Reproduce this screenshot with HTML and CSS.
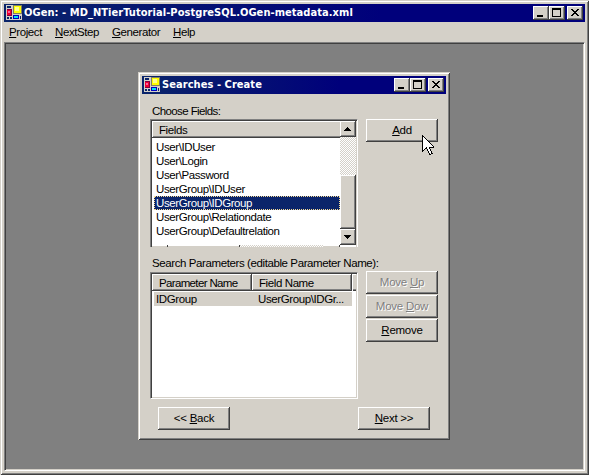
FILE: index.html
```
<!DOCTYPE html>
<html lang="en">
<head>
<meta charset="utf-8">
<title>OGen</title>
<link rel="stylesheet" href="styles.css">
</head>
<body>
<svg width="0" height="0" class="defs">
  <symbol id="app" viewBox="0 0 16 16">
    <path d="M0 0h16v15H0z" fill="#d4d0c8"/>
    <path d="M1 1h4v2H1zM1 12h2v2H1zM4 12h2v2H4zM14 11h1v3h-1z" fill="#0a246a"/>
    <path d="M1 4h5v7H1z" fill="#800040"/><path d="M1 5h4v5H1z" fill="#f00030"/><path d="M2 6h2v2H2z" fill="#ff60a0"/>
    <path d="M7 0h9v9H7z" fill="#808060"/><path d="M8 1h7v7H8z" fill="#ffff00"/><path d="M9 2h4v4H9z" fill="#ffff90"/>
    <path d="M7 10h6v4H7z" fill="#0000c0"/><path d="M8 11h4v2H8z" fill="#00e0f0"/>
  </symbol>
  <symbol id="min" viewBox="0 0 16 14"><path d="M4 9h6v2H4z"/></symbol>
  <symbol id="max" viewBox="0 0 16 14"><path fill-rule="evenodd" d="M3 2h9v9H3zM4 4v6h7V4z"/></symbol>
  <symbol id="close" viewBox="0 0 16 14"><path d="M4 3h2v1h1v1h2V4h1V3h2v1h-1v1h-1v1H9v1h1v1h1v1h1v1h-2V9H9V8H7v1H6v1H4V9h1V8h1V7h1V6H6V5H5V4H4z"/></symbol>
</svg>
<div class="window main">
  <div class="titlebar">
    <svg class="app"><use href="#app"/></svg><span class="caption">OGen: - MD_NTierTutorial-PostgreSQL.OGen-metadata.xml</span>
    <div class="controls"><svg class="ctl"><use href="#min"/></svg><svg class="ctl"><use href="#max"/></svg><svg class="ctl last"><use href="#close"/></svg></div>
  </div>
  <div class="menu"><span class="m1"><u>P</u>roject</span><span class="m2"><u>N</u>extStep</span><span class="m3"><u>G</u>enerator</span><span class="m4"><u>H</u>elp</span></div>
  <div class="client">
    <div class="window dialog">
      <div class="titlebar">
        <svg class="app"><use href="#app"/></svg><span class="caption">Searches - Create</span>
        <div class="controls"><svg class="ctl"><use href="#min"/></svg><svg class="ctl"><use href="#max"/></svg><svg class="ctl last"><use href="#close"/></svg></div>
      </div>
      <div class="form">
        <div class="label choose">Choose Fields:</div>
        <div class="row row-fields">
          <div class="list fields">
            <div class="pane">
              <div class="head"><span>Fields</span></div>
              <ul>
                <li>User\IDUser</li><li>User\Login</li><li>User\Password</li><li>UserGroup\IDUser</li>
                <li class="selected">UserGroup\IDGroup</li><li>UserGroup\Relationdate</li><li>UserGroup\Defaultrelation</li>
              </ul>
              <div class="hscroll"><i class="arrow"></i><i class="bar"></i><i class="track"></i><i class="arrow"></i></div>
            </div>
            <div class="vscroll">
              <svg class="sb" viewBox="0 0 16 16"><path d="M7 6h1v1h1v1h1v1h1v1H4V9h1V8h1V7h1z"/></svg>
              <div class="thumb"></div>
              <svg class="sb" viewBox="0 0 16 16"><path d="M4 6h7v1h-1v1H9v1H8v1H7V9H6V8H5V7H4z"/></svg>
            </div>
          </div>
          <div class="side"><div class="button"><span><u>A</u>dd</span></div></div>
        </div>
        <div class="label params-label">Search Parameters (editable Parameter Name):</div>
        <div class="row row-params">
          <div class="list params">
            <div class="cols"><div class="head"><span class="pn">Parameter Name</span></div><div class="head"><span>Field Name</span></div><div class="head rest"></div></div>
            <div class="record"><span>IDGroup</span><span>UserGroup\IDGr...</span></div>
          </div>
          <div class="side">
            <div class="button disabled"><span>Move <u>U</u>p</span></div>
            <div class="button disabled"><span>Move <u>D</u>ow</span></div>
            <div class="button"><span><u>R</u>emove</span></div>
          </div>
        </div>
        <div class="nav"><div class="button"><span>&lt;&lt; <u>B</u>ack</span></div><div class="button"><span><u>N</u>ext &gt;&gt;</span></div></div>
      </div>
    </div>
  </div>
</div>
<svg class="cursor" viewBox="0 0 12 21"><path d="M.5.5v16l4-4 3 7 2.500-1-3-6.500h5z" fill="#fff" stroke="#000"/></svg>
</body>
</html>
```
FILE: styles.css
```
* { box-sizing: border-box; }
body { margin: 0; width: 589px; height: 475px; overflow: hidden; font: 11.5px/14px "Liberation Sans", Arial, sans-serif; letter-spacing: -0.4px; color: #000; white-space: nowrap; }
.defs { position: absolute; }
svg { display: block; flex: none; shape-rendering: crispEdges; }
u { text-decoration: underline; text-decoration-thickness: 1px; text-underline-offset: 1px; text-decoration-skip-ink: none; }
.window { background: #d4d0c8; padding: 4px; box-shadow: inset 1px 1px #d4d0c8, inset -1px -1px #404040, inset 2px 2px #fff, inset -2px -2px #808080; }
.main { width: 589px; height: 475px; }
.titlebar { height: 18px; display: flex; align-items: center; padding: 0 2px; background: linear-gradient(90deg, #0a246a, #00007b 65%); color: #fff; }
.app { width: 16px; height: 16px; }
.caption { margin-left: 2px; font: bold 11px/18px "DejaVu Sans Condensed", "DejaVu Sans", sans-serif; letter-spacing: 0.06px; }
.controls { margin-left: auto; display: flex; }
.ctl { width: 16px; height: 14px; background: #d4d0c8; box-shadow: inset -1px -1px #404040, inset 1px 1px #fff, inset -2px -2px #808080; }
.last { margin-left: 2px; }
.menu { height: 20px; display: flex; padding: 3px 5px; }
.m1 { width: 46px; }
.m2 { width: 57px; }
.m3 { width: 61px; }
.client { height: 429px; padding: 29px 0 0 133px; background: #808080; border: 1px solid; border-color: #808080 #fff #fff #808080; box-shadow: inset 1px 1px #404040, inset -1px -1px #d4d0c8; }
.dialog { width: 312px; height: 368px; }
.form { padding: 10px 8px 0; }
.label { height: 14px; padding-left: 2px; }
.choose { letter-spacing: -0.6px; }
.row { display: flex; gap: 8px; }
.row-fields { margin-top: 1px; height: 128px; }
.list { width: 208px; background: #fff; border: 1px solid; border-color: #808080 #fff #fff #808080; box-shadow: inset 1px 1px #404040, inset -1px -1px #d4d0c8; padding: 1px; }
.fields { height: 128px; border-bottom: 0; padding-bottom: 0; display: flex; box-shadow: inset 1px 1px #404040, inset -1px 0 #d4d0c8; }
.pane { width: 188px; }
.head { height: 17px; padding: 2px 0 0 7px; background: #d4d0c8; box-shadow: inset -1px -1px #404040, inset 1px 1px #fff, inset -2px -2px #808080; }
.pane .head { box-shadow: inset 0 -1px #404040, inset 1px 1px #fff, inset 0 -2px #808080; }
ul { list-style: none; margin: 0; padding: 2px 0 0 2px; height: 107px; }
li { height: 14px; padding-left: 2px; }
.selected { background: #0a246a; color: #fff; outline: 1px dotted #f5db95; outline-offset: -1px; }
.hscroll { height: 2px; display: flex; }
.arrow { width: 16px; background: #d4d0c8; box-shadow: inset -1px 0 #404040, inset 0 1px #fff; }
.bar { width: 72px; background: #d4d0c8; box-shadow: inset -1px 0 #404040, inset 0 1px #fff; }
.track { flex: 1; background: repeating-conic-gradient(#fff 0 25%, #d4d0c8 0 50%) 0 0 / 2px 2px; }
.vscroll { width: 16px; height: 124px; display: flex; flex-direction: column; background: repeating-conic-gradient(#fff 0 25%, #d4d0c8 0 50%) 0 0 / 2px 2px; }
.sb, .thumb, .button { background: #d4d0c8; box-shadow: inset -1px -1px #404040, inset 1px 1px #fff, inset -2px -2px #808080; }
.sb { width: 16px; height: 16px; }
.thumb { height: 54px; margin-top: auto; }
.side { display: flex; flex-direction: column; gap: 1px; }
.button { width: 72px; height: 23px; text-align: center; line-height: 22px; letter-spacing: -0.25px; }
.disabled { color: #808080; text-shadow: 1px 1px #fff; }
.params-label { margin-top: 9px; }
.row-params { margin-top: 1px; height: 128px; }
.params { height: 127px; margin-top: 1px; }
.cols { display: flex; }
.cols .head { width: 100px; flex: none; }
.cols .rest { width: 4px; padding: 0; box-shadow: inset 1px 1px #fff, inset 0 -1px #404040, inset 0 -2px #808080; }
.pn { letter-spacing: -0.65px; }
.record { height: 14px; width: 198px; margin: 1px 0 0 2px; padding-left: 2px; background: #d4d0c8; display: flex; }
.record span:first-child { width: 102px; }
.nav { display: flex; justify-content: space-between; padding: 8px 8px 0; }
.cursor { position: absolute; left: 422px; top: 135px; width: 12px; height: 21px; }
```
